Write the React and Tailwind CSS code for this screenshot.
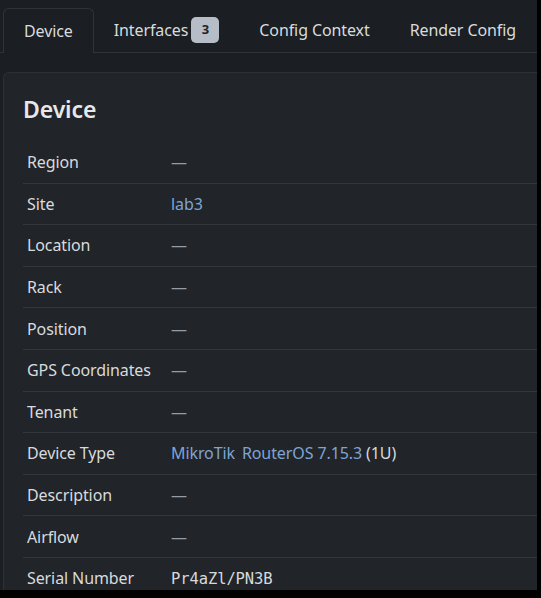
const rows = [
  { label: "Region" },
  { label: "Site", link: "lab3" },
  { label: "Location" },
  { label: "Rack" },
  { label: "Position" },
  { label: "GPS Coordinates" },
  { label: "Tenant" },
  { label: "Device Type", type: true },
  { label: "Description" },
  { label: "Airflow" },
  { label: "Serial Number", mono: "Pr4aZl/PN3B" },
];

const tabs = ["Device", "Interfaces", "Config Context", "Render Config"];

function Value({ row }) {
  if (row.link) {
    return <span className="text-[#7ea4d6]">{row.link}</span>;
  }
  if (row.type) {
    return (
      <span>
        <span className="text-[#7ea4d6]">MikroTik</span>
        <span className="ml-[7px] text-[#7ea4d6]">RouterOS 7.15.3</span>{" "}
        <span className="text-[#d6d9dc]">(1U)</span>
      </span>
    );
  }
  if (row.mono) {
    return (
      <span className="font-['DejaVu_Sans_Mono',monospace] text-[15.5px] text-[#d6d9dc]">
        {row.mono}
      </span>
    );
  }
  return <span className="text-[#969ca3]">—</span>;
}

export default function App() {
  return (
    <div className="h-[598px] w-[541px] overflow-hidden bg-black font-['Noto_Sans',sans-serif] text-[16px] tracking-[-0.1px]">
      <div className="h-[590px] w-[537px] overflow-hidden bg-[#1b1e22]">
        <div className="flex h-[53px] items-end whitespace-nowrap border-b border-[#30343a] pl-[3px]">
          {tabs.map((tab, i) => (
            <div
              key={tab}
              className={
                i === 0
                  ? "-mb-px flex h-[45px] shrink-0 items-center rounded-t-md border border-b-0 border-[#30343a] bg-[#1b1e22] px-5 text-[#d8dbde]"
                  : "flex h-[44px] shrink-0 items-center px-5 text-[#d8dbde]"
              }
            >
              {tab}
              {tab === "Interfaces" && (
                <span className="ml-[3px] flex h-[26px] w-[28px] items-center justify-center rounded-[5px] bg-[#b6bdc6] text-[13px] font-bold text-[#1f2328]">
                  3
                </span>
              )}
            </div>
          ))}
        </div>

        <div className="ml-[3px] mt-[19px] rounded-l-md border border-r-0 border-[#2d3136] bg-[#212428] pl-[19px] pt-[23px]">
          <h2 className="mb-[19px] text-[23px] font-semibold leading-[26px] text-[#e6e8ea]">
            Device
          </h2>
          <div>
            {rows.map((row, i) => (
              <div
                key={row.label}
                className={
                  "flex h-[41.6px] items-center " +
                  (i > 0 ? "border-t border-[#33373c]" : "")
                }
              >
                <div className="w-[148px] pl-1 text-[#d8dbde]">{row.label}</div>
                <div>
                  <Value row={row} />
                </div>
              </div>
            ))}
          </div>
        </div>
      </div>
    </div>
  );
}
